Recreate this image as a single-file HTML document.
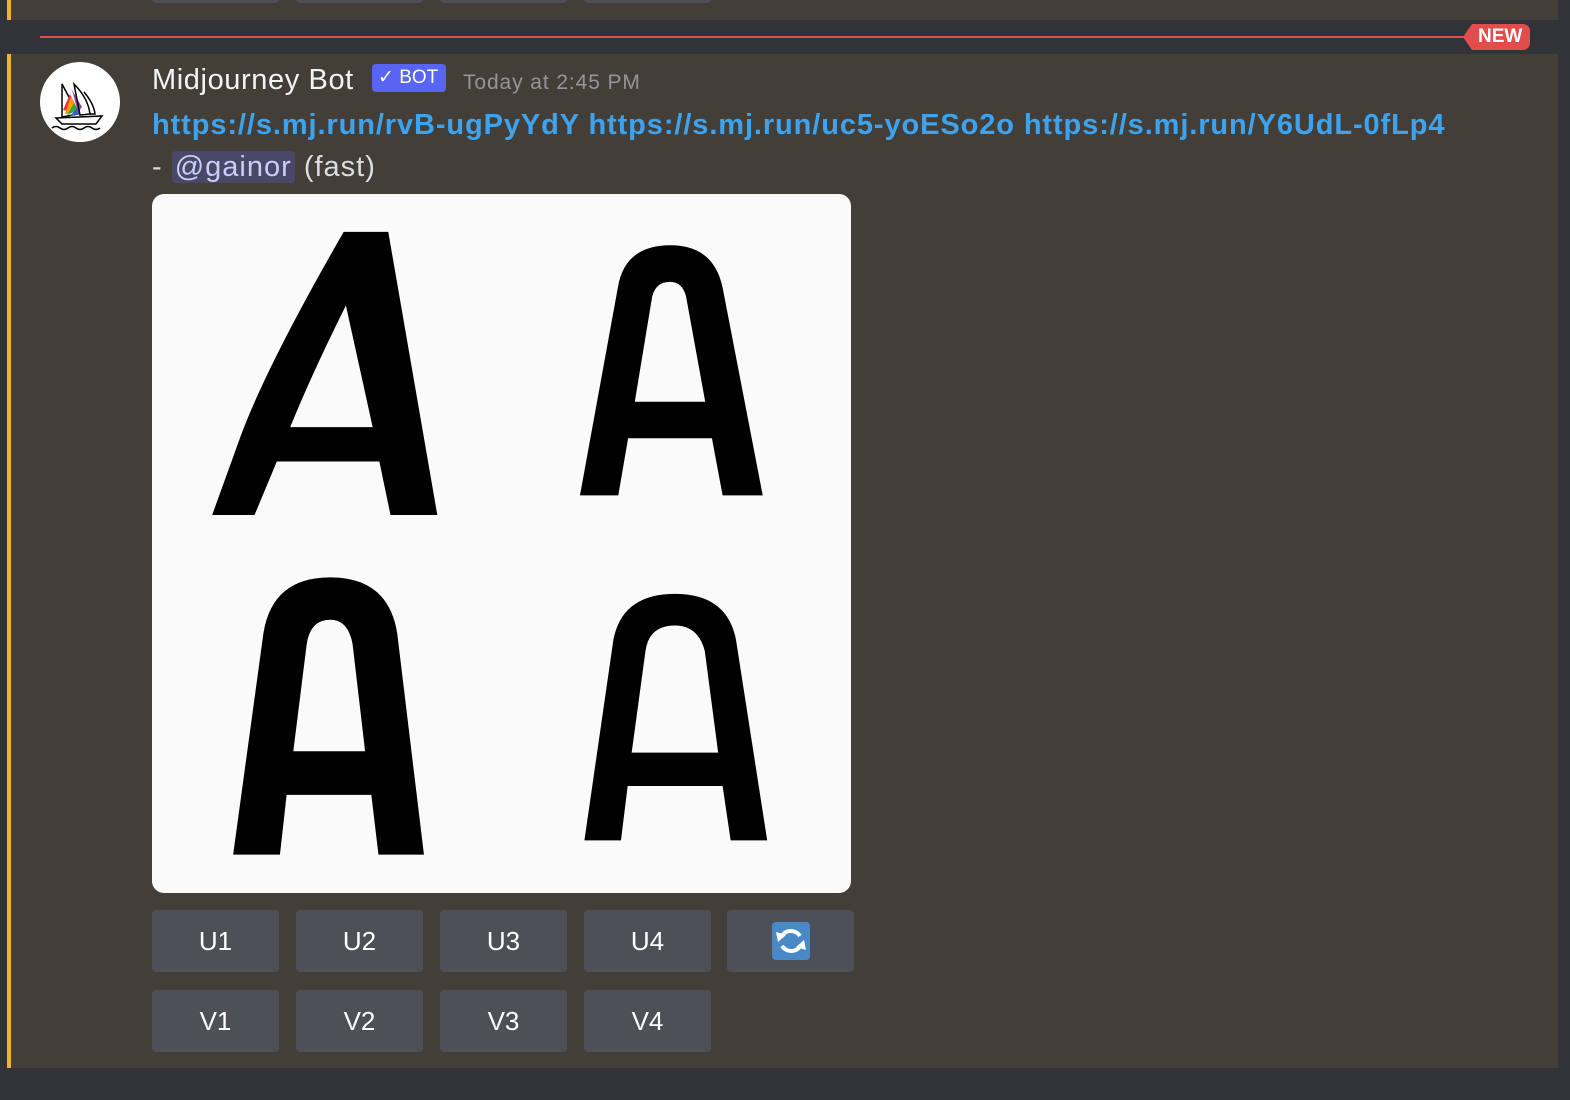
<!DOCTYPE html>
<html><head><meta charset="utf-8"><style>
*{margin:0;padding:0;box-sizing:border-box}
html,body{width:1570px;height:1100px;overflow:hidden;background:#313338;font-family:"Liberation Sans",sans-serif}
.main{position:absolute;left:0;top:0;width:1558px;height:1068px;background:#433f38}
.ybar{position:absolute;left:7px;width:4px;background:#f0b232}
.leftdark{position:absolute;left:0;top:0;width:7px;height:1068px;background:#313338}
.divider{position:absolute;left:7px;top:20px;width:1551px;height:34px;background:#313338}
.redline{position:absolute;left:40px;top:36px;width:1430px;height:2px;background:#e24c4b}
.new{position:absolute;left:1472px;top:24px;width:58px;height:26px;background:#e24c4b;border-radius:0 7px 7px 0;color:#fff;font-weight:bold;font-size:19px;line-height:26px;padding-left:6px}
.new:before{content:"";position:absolute;left:-9px;top:0;border-right:9px solid #e24c4b;border-top:13px solid transparent;border-bottom:13px solid transparent}
.avatar{position:absolute;left:40px;top:62px;width:80px;height:80px;border-radius:50%;background:#fff;overflow:hidden}
.name{position:absolute;left:152px;top:64px;color:#f2f3f5;font-size:29px;letter-spacing:0.6px}
.bot{position:absolute;left:372px;top:64px;width:74px;height:28px;background:#5865f2;border-radius:4px;color:#fff;font-size:19px;line-height:28px;padding-left:6px}
.time{position:absolute;left:463px;top:71px;color:#94959b;font-size:21px;letter-spacing:0.9px}
.link{position:absolute;left:152px;top:109px;color:#3ea3ef;font-weight:bold;font-size:29px;white-space:nowrap;letter-spacing:0.9px}
.l3{position:absolute;left:152px;top:151px;color:#dbdee1;font-size:29px;white-space:nowrap;letter-spacing:1px}
.mention{background:#4a4867;color:#c9cdfb;border-radius:4px;padding:0 3px}
.img{position:absolute;left:152px;top:194px;width:699px;height:699px;border-radius:12px;background:#fafafa;overflow:hidden}
.btn{position:absolute;width:127px;height:62px;background:#4e5058;border-radius:4px;color:#fff;font-size:26px;text-align:center;line-height:62px}
</style></head><body>
<div class="main"></div>
<div class="leftdark"></div>
<div class="ybar" style="top:0;height:20px"></div>
<div class="ybar" style="top:54px;height:1014px"></div>
<div class="btn" style="left:152px;top:-59px"></div>
<div class="btn" style="left:296px;top:-59px"></div>
<div class="btn" style="left:440px;top:-59px"></div>
<div class="btn" style="left:584px;top:-59px"></div>
<div class="divider"></div>
<div class="redline"></div>
<div class="new">NEW</div>
<div class="avatar"><svg width="80" height="80" viewBox="0 0 80 80">
<path d="M22 22 L38 52 L22 55 Z" fill="none" stroke="#000" stroke-width="1.5"/>
<path d="M23 48 L30 32 L40 52 Z" fill="#e33"/>
<path d="M25 52 L31 34 L36 45 L28 52Z" fill="#f90"/>
<path d="M27 53 L34 41 L38 48 Z" fill="#3a3"/>
<path d="M30 54 L37 46 L40 52Z" fill="#36c"/>
<path d="M38 50 L32 28 L42 45 Z" fill="#8b3fb7"/>
<path d="M34 22 Q48 36 50 52 L40 53 Z" fill="none" stroke="#000" stroke-width="1.5"/>
<path d="M44 30 Q54 42 55 52 L50 52" fill="none" stroke="#000" stroke-width="1.5"/>
<path d="M16 56 L62 54 L56 62 L22 62 Z" fill="none" stroke="#000" stroke-width="1.5"/>
<path d="M12 66 q4 -3 8 0 t8 0 t8 0 t8 0 t8 0 t8 0" fill="none" stroke="#000" stroke-width="1.5"/>
</svg></div>
<div class="name">Midjourney Bot</div>
<div class="bot">✓ BOT</div>
<div class="time">Today at 2:45 PM</div>
<div class="link">https://s.mj.run/rvB-ugPyYdY https://s.mj.run/uc5-yoESo2o https://s.mj.run/Y6UdL-0fLp4</div>
<div class="l3">- <span class="mention">@gainor</span> (fast)</div>
<div class="img"><svg width="699" height="699" viewBox="0 0 1568 1568">
<path fill-rule="evenodd" fill="#000" d="M135 720 L230 720 L280 600 L510 600 L535 720 L640 720 L530 85 L430 85 Q260 380 200 540 Z M310 523 L495 523 L435 250 Q360 400 310 523 Z"/>
<path fill-rule="evenodd" fill="#000" d="M960 676 L1046 676 L1068 548 L1256 548 L1280 676 L1370 676 L1280 210 Q1260 115 1163 115 Q1060 115 1045 210 Z M1083 466 L1241 466 L1198 230 Q1190 197 1162 197 Q1130 197 1122 230 Z"/>
<path fill-rule="evenodd" fill="#000" d="M182 1482 L287 1482 L302 1348 L492 1348 L508 1482 L610 1482 L550 985 Q530 860 400 860 Q270 860 250 985 Z M317 1250 L478 1250 L450 1010 Q440 955 400 955 Q355 955 347 1010 Z"/>
<path fill-rule="evenodd" fill="#000" d="M970 1450 L1052 1450 L1067 1328 L1280 1328 L1298 1450 L1380 1450 L1310 1000 Q1290 897 1173 897 Q1055 897 1035 1000 Z M1076 1253 L1270 1253 L1240 1025 Q1225 968 1173 968 Q1115 968 1107 1025 Z"/>
</svg></div>
<div class="btn" style="left:152px;top:910px">U1</div>
<div class="btn" style="left:296px;top:910px">U2</div>
<div class="btn" style="left:440px;top:910px">U3</div>
<div class="btn" style="left:584px;top:910px">U4</div>
<div class="btn" style="left:727px;top:910px"><svg width="38" height="38" viewBox="0 0 38 38" style="margin-top:12px"><rect width="38" height="38" rx="4" fill="#4a89c8"/><path d="M28 14 A11 11 0 0 0 9 15" fill="none" stroke="#fff" stroke-width="4"/><path d="M10 24 A11 11 0 0 0 29 23" fill="none" stroke="#fff" stroke-width="4"/><path d="M4 10 L14 13 L6 20Z" fill="#fff"/><path d="M34 28 L24 25 L32 18Z" fill="#fff"/></svg></div>
<div class="btn" style="left:152px;top:990px">V1</div>
<div class="btn" style="left:296px;top:990px">V2</div>
<div class="btn" style="left:440px;top:990px">V3</div>
<div class="btn" style="left:584px;top:990px">V4</div>
</body></html>
